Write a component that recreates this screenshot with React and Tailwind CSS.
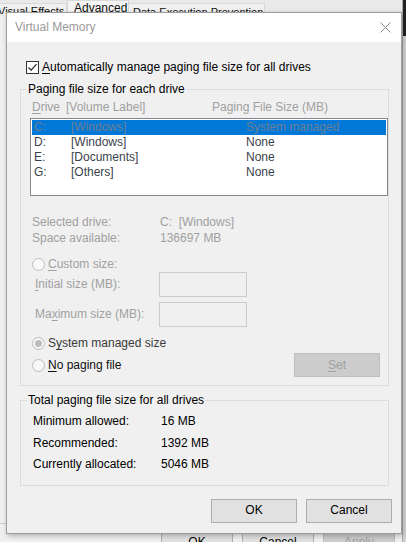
const U = ({ children }) => (
  <span className="underline underline-offset-[2px] decoration-[1px]">{children}</span>
);

function Checkbox() {
  return (
    <span className="w-[13px] h-[13px] border border-[#333333] bg-white flex items-center justify-center shrink-0">
      <svg width="11" height="11" viewBox="0 0 11 11">
        <path d="M1.5 5.5 L4.2 8.2 L9.5 2.2" stroke="#222222" strokeWidth="1.2" fill="none" />
      </svg>
    </span>
  );
}

function Radio({ checked }) {
  return (
    <span className="w-[13px] h-[13px] rounded-full border border-[#bcbcbc] bg-[#f8f8f8] flex items-center justify-center shrink-0">
      {checked && <span className="w-[7px] h-[7px] rounded-full bg-[#bcbcbc]" />}
    </span>
  );
}

const drives = [
  { d: "C:", label: "[Windows]", size: "System managed", selected: true },
  { d: "D:", label: "[Windows]", size: "None" },
  { d: "E:", label: "[Documents]", size: "None" },
  { d: "G:", label: "[Others]", size: "None" },
];

export default function App() {
  return (
    <div className="relative w-[406px] h-[542px] overflow-hidden bg-[#f0f0f0] text-[12px] leading-[15px] font-['Liberation_Sans',Arial,sans-serif]">
      {/* window behind: tabs */}
      <div className="absolute top-0 left-0 w-[406px] h-[14px] bg-[#e9e9e9] flex items-end text-[11px]">
        <div className="w-[70px] h-[11px] -ml-[3px] border border-b-0 border-[#d9d9d9] bg-[#f0f0f0] text-[#111] leading-[15px] overflow-hidden whitespace-nowrap">
          Visual Effects
        </div>
        <div className="w-[62px] h-[14px] border border-b-0 border-[#d9d9d9] bg-[#f4f4f4] text-[#111] pl-[6px] text-[12px] leading-[14px] overflow-hidden whitespace-nowrap">
          Advanced
        </div>
        <div className="w-[136px] h-[11px] border border-b-0 border-l-0 border-[#d9d9d9] bg-[#f0f0f0] text-[#111] pl-[4px] leading-[16px] overflow-hidden whitespace-nowrap">
          Data Execution Prevention
        </div>
      </div>
      {/* window behind: right edge */}
      <div className="absolute top-0 left-[402px] w-[4px] h-[542px] bg-[#d2d2d2] border-l border-[#a8a8a8]">
        <div className="h-[36px] bg-[#222222]" />
      </div>
      <div className="absolute top-[523px] left-0 w-[8px] h-px bg-[#d0d0d0]" />
      {/* window behind: buttons */}
      <div className="absolute top-[531px] left-[161px] flex gap-[9px]">
        <div className="w-[72px] h-[23px] border border-[#adadad] bg-[#e1e1e1] text-center leading-[21px]">OK</div>
        <div className="w-[72px] h-[23px] border border-[#adadad] bg-[#e1e1e1] text-center leading-[21px]">Cancel</div>
        <div className="w-[72px] h-[23px] border border-[#bfbfbf] bg-[#cccccc] text-center leading-[21px] text-[#a0a0a0]">Apply</div>
      </div>

      {/* Virtual Memory dialog */}
      <div className="absolute left-[6px] top-[12px] w-[396px] h-[522px] border border-[#9c9c9c] bg-[#f0f0f0] shadow-[1px_2px_5px_rgba(0,0,0,0.25)] flex flex-col">
        <div className="h-[29px] bg-white flex items-center justify-between pl-[8px] pr-[10px] text-[#9a9a9a] shrink-0">
          <span>Virtual Memory</span>
          <svg width="11" height="11" viewBox="0 0 11 11">
            <path d="M0.5 0.5 L10.5 10.5 M10.5 0.5 L0.5 10.5" stroke="#8a8a8a" strokeWidth="1" />
          </svg>
        </div>

        <div className="flex-1 pl-[13px] pr-[12px] text-black">
          <div className="mt-[18px] ml-[6px] flex items-center gap-[3px]">
            <Checkbox />
            <span>
              <U>A</U>utomatically manage paging file size for all drives
            </span>
          </div>

          <fieldset className="mt-[7px] w-[369px] border border-[#dcdcdc] pb-[8px]">
            <legend className="ml-[6px] px-[1px]">Paging file size for each drive</legend>
            <div className="mt-[3px] ml-[11px] flex text-[#a0a0a0]">
              <span className="w-[34px]">
                <U>D</U>rive
              </span>
              <span className="w-[146px]">[Volume Label]</span>
              <span>Paging File Size (MB)</span>
            </div>

            <div className="mt-[3px] ml-[9px] w-[358px] h-[78px] border border-[#828790] bg-white p-px">
              {drives.map((r) => (
                <div
                  key={r.d}
                  className={`h-[15px] flex ${r.selected ? "bg-[#0078d7] text-[#6f7e93]" : "text-[#3a3f4a]"}`}
                >
                  <span className="w-[39px] pl-[2px]">{r.d}</span>
                  <span className="w-[175px]">{r.label}</span>
                  <span>{r.size}</span>
                </div>
              ))}
            </div>

            <div className="mt-[19px] ml-[11px] text-[#a0a0a0]">
              <div className="flex">
                <span className="w-[128px]">Selected drive:</span>
                <span>C:&nbsp; [Windows]</span>
              </div>
              <div className="flex mt-px">
                <span className="w-[128px]">Space available:</span>
                <span>136697 MB</span>
              </div>
            </div>

            <div className="mt-[11px] ml-[11px] flex items-center gap-[3px] text-[#a0a0a0]">
              <Radio />
              <span>
                <U>C</U>ustom size:
              </span>
            </div>
            <div className="ml-[14px] flex items-center h-[25px] text-[#a0a0a0]">
              <span className="w-[124px]">
                <U>I</U>nitial size (MB):
              </span>
              <span className="w-[88px] h-[25px] border border-[#cccccc] bg-[#f0f0f0]" />
            </div>
            <div className="mt-[5px] ml-[14px] flex items-center h-[25px] text-[#a0a0a0]">
              <span className="w-[124px]">
                Ma<U>x</U>imum size (MB):
              </span>
              <span className="w-[88px] h-[25px] border border-[#cccccc] bg-[#f0f0f0]" />
            </div>

            <div className="mt-[9px] ml-[11px] flex items-center gap-[3px] text-[#3a3a3a]">
              <Radio checked />
              <span>
                S<U>y</U>stem managed size
              </span>
            </div>
            <div className="mt-[2px] ml-[11px] mr-[8px] h-[24px] flex items-center justify-between">
              <div className="flex items-center gap-[3px] text-[#111]">
                <Radio />
                <span>
                  <U>N</U>o paging file
                </span>
              </div>
              <div className="w-[86px] h-[24px] border border-[#bfbfbf] bg-[#cccccc] text-[#a0a0a0] flex items-center justify-center">
                <span>
                  <U>S</U>et
                </span>
              </div>
            </div>
          </fieldset>

          <fieldset className="mt-[7px] w-[369px] border border-[#dcdcdc] pb-[9px]">
            <legend className="ml-[6px] px-[1px]">Total paging file size for all drives</legend>
            <div className="mt-[3px] ml-[12px] leading-[21.5px]">
              <div className="flex">
                <span className="w-[128px]">Minimum allowed:</span>
                <span>16 MB</span>
              </div>
              <div className="flex">
                <span className="w-[128px]">Recommended:</span>
                <span>1392 MB</span>
              </div>
              <div className="flex">
                <span className="w-[128px]">Currently allocated:</span>
                <span>5046 MB</span>
              </div>
            </div>
          </fieldset>

          <div className="mt-[13px] -mr-[3px] flex justify-end gap-[9px]">
            <button className="w-[86px] h-[24px] border border-[#adadad] bg-[#e1e1e1]">OK</button>
            <button className="w-[86px] h-[24px] border border-[#adadad] bg-[#e1e1e1]">Cancel</button>
          </div>
        </div>
      </div>
    </div>
  );
}
